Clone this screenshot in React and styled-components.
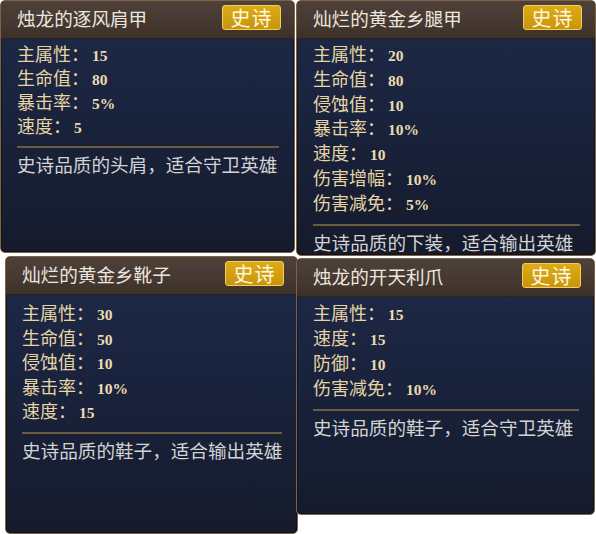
import styled, { createGlobalStyle } from 'styled-components'

const GlobalStyle = createGlobalStyle`
  html, body {
    margin: 0;
    padding: 0;
    background: #ffffff;
  }
  body {
    font-family: "Noto Sans CJK SC", "Noto Sans", sans-serif;
  }
`

const items = [
  {
    name: '烛龙的逐风肩甲',
    stats: [
      ['主属性', '15'],
      ['生命值', '80'],
      ['暴击率', '5%'],
      ['速度', '5'],
    ],
    desc: '史诗品质的头肩，适合守卫英雄',
    box: { w: 295, h: 253, ml: 0, mt: 0, pt: 2, lh: 24 },
  },
  {
    name: '灿烂的黄金乡腿甲',
    stats: [
      ['主属性', '20'],
      ['生命值', '80'],
      ['侵蚀值', '10'],
      ['暴击率', '10%'],
      ['速度', '10'],
      ['伤害增幅', '10%'],
      ['伤害减免', '5%'],
    ],
    desc: '史诗品质的下装，适合输出英雄',
    box: { w: 300, h: 256, ml: 1, mt: 0, pt: 2, lh: 24.8 },
  },
  {
    name: '灿烂的黄金乡靴子',
    stats: [
      ['主属性', '30'],
      ['生命值', '50'],
      ['侵蚀值', '10'],
      ['暴击率', '10%'],
      ['速度', '15'],
    ],
    desc: '史诗品质的鞋子，适合输出英雄',
    box: { w: 293, h: 278, ml: 5, mt: 0, pt: 5, lh: 24.5 },
  },
  {
    name: '烛龙的开天利爪',
    stats: [
      ['主属性', '15'],
      ['速度', '15'],
      ['防御', '10'],
      ['伤害减免', '10%'],
    ],
    desc: '史诗品质的鞋子，适合守卫英雄',
    box: { w: 299, h: 257, ml: 1, mt: 2, pt: 3, lh: 25 },
  },
]

function App() {
  return (
    <>
      <GlobalStyle />
      <Board>
        {items.map(({ name, stats, desc, box }) => (
          <Card key={name} $w={box.w} $h={box.h} $ml={box.ml} $mt={box.mt}>
            <Header>
              <Title>{name}</Title>
              <Badge>史诗</Badge>
            </Header>
            <Body $pt={box.pt}>
              <StatList>
                {stats.map(([label, value]) => (
                  <Stat key={label} $lh={box.lh}>
                    {label}：<Value>{value}</Value>
                  </Stat>
                ))}
              </StatList>
              <Divider />
              <Desc>{desc}</Desc>
            </Body>
          </Card>
        ))}
      </Board>
    </>
  )
}

export default App

const Board = styled.div`
  width: 596px;
  height: 534px;
  display: grid;
  grid-template-columns: 295px 301px;
  grid-template-rows: 256px 278px;
  align-items: start;
  overflow: hidden;
`

const Card = styled.div`
  width: ${(p) => p.$w}px;
  height: ${(p) => p.$h}px;
  margin-left: ${(p) => p.$ml}px;
  margin-top: ${(p) => p.$mt}px;
  box-sizing: border-box;
  border: 1px solid #7d6447;
  border-radius: 5px;
  overflow: hidden;
  display: flex;
  flex-direction: column;
  background: linear-gradient(180deg, #1e2a49 0%, #1a233d 45%, #151b2c 100%);
  box-shadow: inset 0 0 0 1px rgba(20, 14, 8, 0.6);
`

const Header = styled.div`
  height: 37px;
  flex-shrink: 0;
  display: flex;
  align-items: center;
  justify-content: space-between;
  padding: 0 13px 0 16px;
  background: linear-gradient(180deg, #4e4139 0%, #453831 60%, #3c3029 100%);
  border-bottom: 1px solid #2a211c;
`

const Title = styled.div`
  color: #ece7df;
  font-size: 18.6px;
  line-height: 24px;
  margin-top: -4px;
`

const Badge = styled.div`
  width: 59px;
  height: 25px;
  box-sizing: border-box;
  margin-top: -4px;
  display: flex;
  align-items: center;
  justify-content: center;
  border: 1px solid #f3cf5a;
  border-radius: 3px;
  background: linear-gradient(180deg, #dcab16 0%, #c8950b 100%);
  color: #fff7e0;
  font-size: 20px;
  line-height: 23px;
  letter-spacing: 1px;
`

const Body = styled.div`
  padding: ${(p) => p.$pt}px 15px 0 16px;
  display: flex;
  flex-direction: column;
`

const StatList = styled.div`
  display: flex;
  flex-direction: column;
`

const Stat = styled.div`
  height: ${(p) => p.$lh}px;
  line-height: ${(p) => p.$lh}px;
  color: #e6d4a5;
  font-size: 18px;
  white-space: nowrap;
`

const Value = styled.span`
  font-family: "Liberation Serif", "DejaVu Serif", serif;
  font-weight: bold;
  font-size: 15.5px;
  margin-left: 3px;
  color: #eadbb0;
`

const Divider = styled.div`
  height: 2px;
  margin-top: 9px;
  background: #6c5a41;
`

const Desc = styled.div`
  margin-top: 3px;
  line-height: 26px;
  color: #d3d3d3;
  font-size: 18.6px;
  white-space: nowrap;
`
